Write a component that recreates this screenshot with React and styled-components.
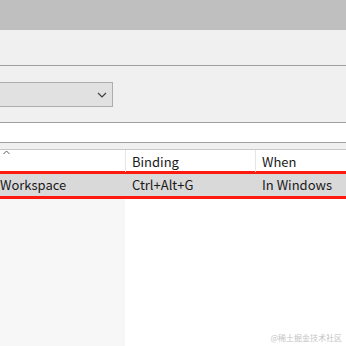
import React from 'react';
import styled, { createGlobalStyle } from 'styled-components';

const GlobalStyle = createGlobalStyle`
  html, body {
    margin: 0;
    padding: 0;
    background: #ffffff;
  }
  body {
    font-family: "Noto Sans CJK SC", "Noto Sans", sans-serif;
    overflow: hidden;
  }
`;

const Window = styled.div`
  width: 346px;
  height: 346px;
  display: flex;
  flex-direction: column;
  overflow: hidden;
  position: relative;
`;

const TitleBar = styled.div`
  height: 30px;
  background: #bfbfbf;
  flex-shrink: 0;
`;

const Toolbar = styled.div`
  height: 35px;
  background: #f0f0f0;
  border-bottom: 1px solid #a0a0a0;
  flex-shrink: 0;
`;

const FilterArea = styled.div`
  height: 56px;
  background: #f0f0f0;
  padding-top: 16px;
  box-sizing: border-box;
  flex-shrink: 0;
`;

const Dropdown = styled.div`
  width: 163px;
  height: 25px;
  margin-left: -50px;
  box-sizing: border-box;
  border: 1px solid #adadad;
  background: #e1e1e1;
  display: flex;
  align-items: center;
  justify-content: flex-end;
  padding-right: 5px;
`;

const SearchBox = styled.div`
  height: 21px;
  box-sizing: border-box;
  border-top: 1px solid #a0a0a0;
  border-bottom: 1px solid #a0a0a0;
  background: #ffffff;
  flex-shrink: 0;
`;

const Spacer = styled.div`
  height: 6px;
  background: #f0f0f0;
  border-bottom: 1px solid #c8c8c8;
  flex-shrink: 0;
`;

const Row = styled.div`
  display: grid;
  grid-template-columns: 125px 130px 1fr;
  height: ${p => p.$h}px;
  background: ${p => p.$bg || '#ffffff'};
  flex-shrink: 0;
  position: relative;
`;

const HeaderCell = styled.div`
  position: relative;
  border-left: ${p => (p.$first ? 'none' : '1px solid #e5e5e5')};
  padding-left: ${p => (p.$first ? 0 : 6)}px;
  font-size: 13px;
  color: #1a1a1a;
  line-height: 21px;
  padding-top: 1px;
  white-space: nowrap;
`;

const Cell = styled.div`
  padding-left: ${p => (p.$first ? 0 : 6)}px;
  font-size: 13px;
  color: #1a1a1a;
  line-height: 22px;
  white-space: nowrap;
  margin-left: ${p => (p.$first ? 0 : 1)}px;
`;

const SortCaret = styled.svg`
  position: absolute;
  left: 3px;
  top: 0px;
`;

const RedLine = styled.div`
  height: 3px;
  background: #ff1a10;
  flex-shrink: 0;
`;

const Body = styled.div`
  flex: 1;
  display: grid;
  grid-template-columns: 125px 1fr;
`;

const SideColumn = styled.div`
  background: #f7f7f7;
`;

const Watermark = styled.div`
  position: absolute;
  right: 4px;
  bottom: 3px;
  font-size: 8px;
  color: #c4c4c4;
  font-family: "Noto Sans CJK SC", sans-serif;
`;

export default function App() {
  return (
    <>
      <GlobalStyle />
      <Window>
        <TitleBar />
        <Toolbar />
        <FilterArea>
          <Dropdown>
            <svg width="10" height="6" viewBox="0 0 10 6">
              <path d="M1 1 L5 5 L9 1" fill="none" stroke="#404040" strokeWidth="1.2" />
            </svg>
          </Dropdown>
        </FilterArea>
        <SearchBox />
        <Spacer />
        <Row $h={21}>
          <HeaderCell $first>
            <SortCaret width="7" height="5" viewBox="0 0 7 5">
              <path d="M0.5 4 L3.5 1 L6.5 4" fill="none" stroke="#606060" strokeWidth="1" />
            </SortCaret>
          </HeaderCell>
          <HeaderCell>Binding</HeaderCell>
          <HeaderCell>When</HeaderCell>
        </Row>
        <RedLine />
        <Row $h={22} $bg="#d9d9d9">
          <Cell $first>Workspace</Cell>
          <Cell>Ctrl+Alt+G</Cell>
          <Cell>In Windows</Cell>
        </Row>
        <RedLine />
        <Body>
          <SideColumn />
          <div />
        </Body>
        <Watermark>@稀土掘金技术社区</Watermark>
      </Window>
    </>
  );
}
